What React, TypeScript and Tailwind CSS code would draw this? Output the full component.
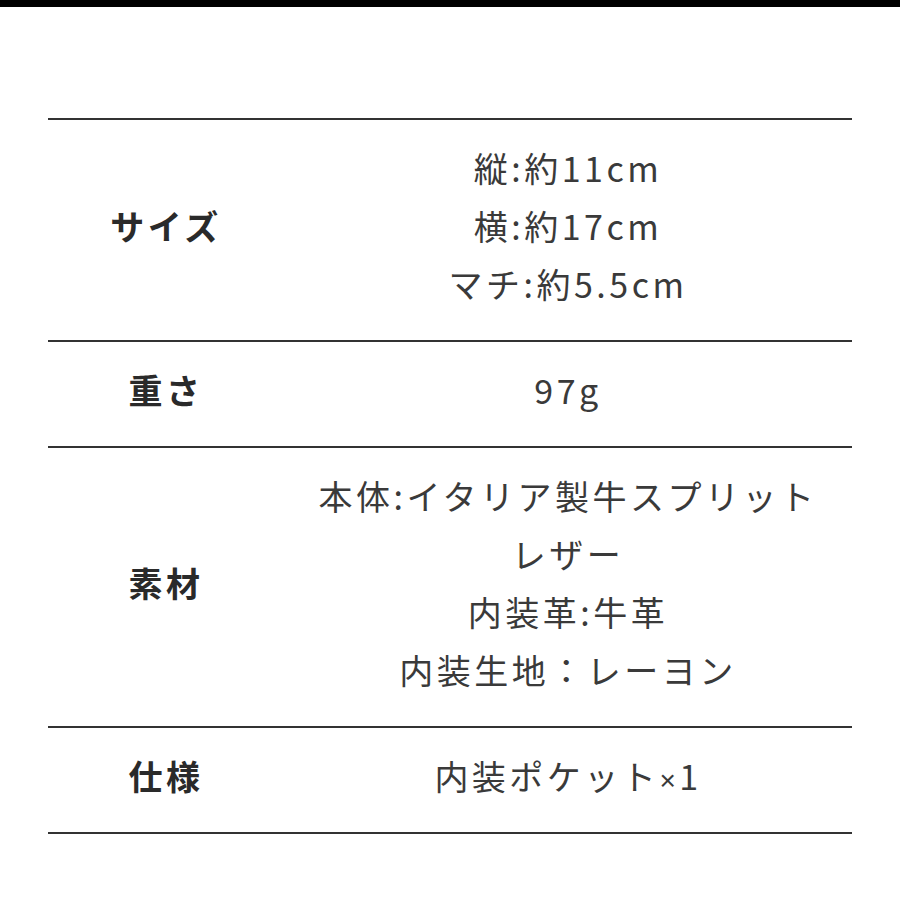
import type { ReactNode } from "react";

const rows: { label: string; lines: ReactNode[] }[] = [
  { label: "サイズ", lines: ["縦:約11cm", "横:約17cm", "マチ:約5.5cm"] },
  { label: "重さ", lines: ["97g"] },
  {
    label: "素材",
    lines: ["本体:イタリア製牛スプリット", "レザー", "内装革:牛革", "内装生地：レーヨン"],
  },
  {
    label: "仕様",
    lines: [
      <>
        内装ポケット
        <span
          style={{ fontFamily: '"Liberation Sans", sans-serif' }}
          className="text-[28px] leading-none"
        >
          ×
        </span>
        1
      </>,
    ],
  },
];

export default function App() {
  return (
    <div
      className="min-h-[900px] w-[900px] bg-white"
      style={{ fontFamily: '"Noto Sans CJK JP", "Noto Sans", sans-serif' }}
    >
      <div className="h-[7px] bg-black" />
      <div className="mx-[48px] mt-[111px] border-t-2 border-[#333]">
        {rows.map((row) => (
          <div key={row.label} className="flex border-b-2 border-[#333] pt-[19px] pb-[27px]">
            <div className="flex w-[236px] items-center justify-center text-[34px] font-bold leading-[58px] tracking-[3.5px] text-[#2a2a2a]">
              {row.label}
            </div>
            <div className="flex flex-1 flex-col items-center text-[34px] leading-[58px] tracking-[3.5px] text-[#3a3a3a]">
              {row.lines.map((line, i) => (
                <div key={i} className="h-[58px]">
                  {line}
                </div>
              ))}
            </div>
          </div>
        ))}
      </div>
    </div>
  );
}
